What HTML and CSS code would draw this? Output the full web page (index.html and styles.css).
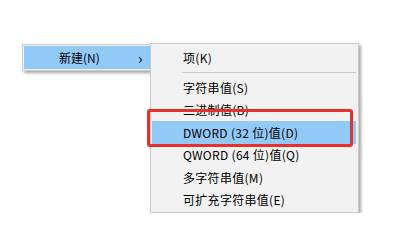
FILE: index.html
```html
<!DOCTYPE html>
<html lang="zh-CN">
<head>
    <meta charset="UTF-8">
    <title>新建</title>
    <link rel="stylesheet" href="styles.css">
</head>
<body>
    <div class="menus">
        <!-- Menu parent -->
        <div class="menu parent">
            <div class="item active">
                <span class="label">新建(N)</span>
                <span class="arrow">›</span>
            </div>
        </div>

        <!-- Sous-menu -->
        <div class="menu sub">
            <div class="item">项(K)</div>
            <div class="separator"></div>
            <div class="item">字符串值(S)</div>
            <div class="item">二进制值(B)</div>
            <div class="item active">DWORD (32 位)值(D)</div>
            <div class="item">QWORD (64 位)值(Q)</div>
            <div class="item">多字符串值(M)</div>
            <div class="item">可扩充字符串值(E)</div>
            <div class="mark"></div>
        </div>
    </div>
</body>
</html>
```

FILE: styles.css
```css
body {
    margin: 0;
    background-color: #ffffff;
    font-family: "Noto Sans CJK SC", "Noto Sans", sans-serif;
    font-size: 12px;
    color: #000000;
}

.menus {
    display: flex;
    align-items: flex-start;
    padding: 43px 0 0 22px;
}

.menu {
    background-color: #f2f2f2;
    border: 1px solid #cccccc;
    box-shadow: 2px 2px 3px rgba(0, 0, 0, 0.35);
}

.parent {
    margin-top: 1px;
    width: 126px;
    padding: 1px 0 1px 1px;
    border-right: none;
}

.parent .item {
    display: flex;
    justify-content: space-between;
    height: 23px;
    padding: 0 0 0 35px;
    letter-spacing: 0;
}

.parent .arrow {
    width: 12px;
    font-size: 15px;
    text-align: left;
}

.sub {
    position: relative;
    width: 204px;
    padding: 2px 2px 1px 1px;
}

.item {
    display: flex;
    align-items: center;
    height: 22.4px;
    padding-left: 31px;
    white-space: nowrap;
    letter-spacing: 0.3px;
}

.item.active {
    background-color: #91c9f7;
}

.separator {
    height: 1px;
    margin: 4px 0 3px 30px;
    background-color: #cccccc;
}

/* Cadre rouge d'annotation */
.mark {
    position: absolute;
    left: -4px;
    top: 65px;
    width: 200px;
    height: 32px;
    border: 3px solid #e8302b;
    border-radius: 3px;
}
```
